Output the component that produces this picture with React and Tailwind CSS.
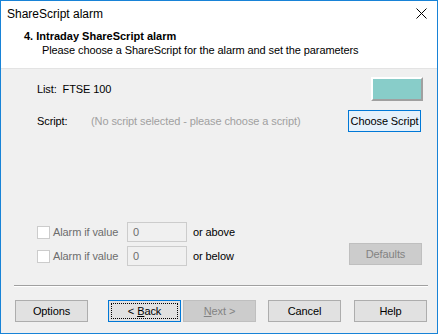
import React from 'react';

const Btn = ({ children, className = '', disabled, focused }) => (
    <div
        className={`w-[73px] h-[22px] flex items-center justify-center border text-[11px] ${
            disabled
                ? 'bg-[#cccccc] border-[#bfbfbf] text-[#838383]'
                : focused
                ? 'bg-[#e1e1e1] border-[#0078d7] text-black'
                : 'bg-[#e1e1e1] border-[#adadad] text-black'
        } ${className}`}
    >
        {focused ? (
            <div className="w-[67px] h-[16px] border border-dotted border-black flex items-center justify-center">
                {children}
            </div>
        ) : (
            children
        )}
    </div>
);

const AlarmRow = ({ label }) => (
    <div className="flex items-center h-[20px]">
        <div className="w-[13px] h-[13px] border border-[#cccccc] bg-white" />
        <span className="ml-[3px] w-[74px] text-[#6d6d6d]">Alarm if value</span>
        <div className="w-[60px] h-[20px] border border-[#cccccc] bg-[#f0f0f0] pl-[5px] flex items-center text-[#6d6d6d]">
            0
        </div>
        <span className="ml-[6px] text-black">{label}</span>
    </div>
);

export default function App() {
    return (
        <div className="w-[441px] h-[336px] bg-white" style={{ fontFamily: '"Liberation Sans", Arial, sans-serif' }}>
            <div className="w-[438px] h-[334px] border border-[#1883d7] flex flex-col text-[11px] tracking-[-0.1px]">
                {/* Title bar */}
                <div className="h-[25px] bg-white flex items-center justify-between pl-[6px] pr-[10px] shrink-0">
                    <span className="text-[12px] text-black tracking-normal">ShareScript alarm</span>
                    <svg width="11" height="11" viewBox="0 0 11 11">
                        <path d="M0.5 0.5 L10.5 10.5 M10.5 0.5 L0.5 10.5" stroke="#000" strokeWidth="1" fill="none" />
                    </svg>
                </div>

                {/* Header */}
                <div className="h-[43px] bg-white pl-[23px] shrink-0 border-b border-[#e3e3e3]">
                    <div className="font-bold text-black leading-[13px] mt-[4px] tracking-normal">
                        4. Intraday ShareScript alarm
                    </div>
                    <div className="pl-[18px] text-black leading-[13px] mt-[1px]">
                        Please choose a ShareScript for the alarm and set the parameters
                    </div>
                </div>

                {/* Body */}
                <div className="flex-1 bg-[#f0f0f0] flex flex-col">
                    <div className="mt-[8px] h-[24px] flex items-center justify-between pl-[36px] pr-[14px]">
                        <span className="text-black">List:&nbsp; FTSE 100</span>
                        <div className="w-[52px] h-[24px] bg-[#88cdc9] border-2 border-t-white border-l-white border-b-[#a0a0a0] border-r-[#a0a0a0]" />
                    </div>

                    <div className="mt-[9px] h-[22px] flex items-center justify-between pl-[36px] pr-[16px]">
                        <div className="flex items-center">
                            <span className="w-[54px] text-black">Script:</span>
                            <span className="text-[#a0a0a0]">(No script selected - please choose a script)</span>
                        </div>
                        <div className="w-[73px] h-[22px] border border-[#0078d7] bg-[#e5f1fb] flex items-center justify-center text-black">
                            Choose Script
                        </div>
                    </div>

                    <div className="mt-[90px] flex justify-between pl-[36px] pr-[15px]">
                        <div className="flex flex-col gap-[4px]">
                            <AlarmRow label="or above" />
                            <AlarmRow label="or below" />
                        </div>
                        <Btn disabled className="mt-[21px] h-[21px]">Defaults</Btn>
                    </div>

                    <div className="mt-[19px] ml-[13px] mr-[9px] h-[1px] bg-[#a0a0a0] border-b border-white box-content" />

                    <div className="mt-[13px] flex items-center pl-[14px]">
                        <Btn>Options</Btn>
                        <Btn focused className="ml-[20px]">
                            &lt; <span className="underline ml-[3px]">B</span>ack
                        </Btn>
                        <Btn disabled className="ml-[2px]">
                            <span className="underline">N</span>ext &gt;
                        </Btn>
                        <Btn className="ml-[12px]">Cancel</Btn>
                        <Btn className="ml-[13px]">Help</Btn>
                    </div>
                </div>
            </div>
        </div>
    );
}
